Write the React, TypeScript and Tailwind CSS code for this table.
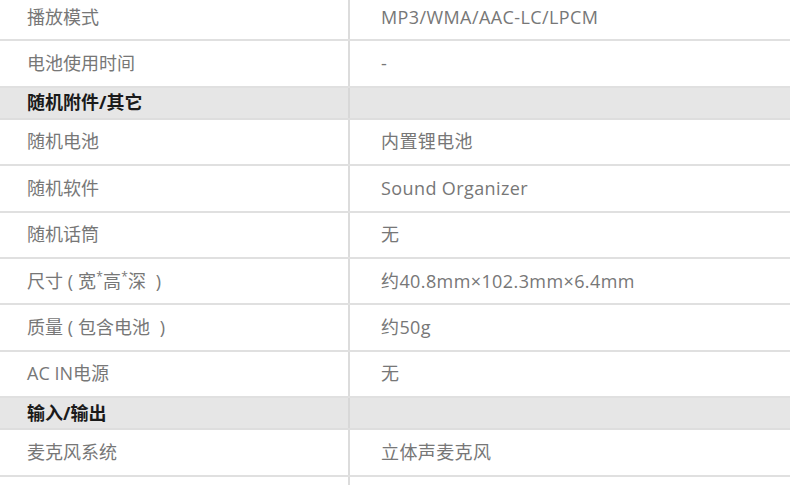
import type { ReactNode } from "react";

type SpecRow =
  | { kind: "section"; title: string }
  | { kind: "item"; label: ReactNode; value: ReactNode };

function Paren(props: { open?: boolean }) {
  return props.open ? (
    <span className="inline-block w-[15px] text-center">(</span>
  ) : (
    <span className="inline-block w-[18px] pr-[3px] text-right">)</span>
  );
}

function Star() {
  return (
    <span className="inline-block w-[7px] text-center align-super text-[12px] leading-none">
      *
    </span>
  );
}

const rows: SpecRow[] = [
  { kind: "item", label: "播放模式", value: "MP3/WMA/AAC-LC/LPCM" },
  { kind: "item", label: "电池使用时间", value: "-" },
  { kind: "section", title: "随机附件/其它" },
  { kind: "item", label: "随机电池", value: "内置锂电池" },
  { kind: "item", label: "随机软件", value: "Sound Organizer" },
  { kind: "item", label: "随机话筒", value: "无" },
  {
    kind: "item",
    label: (
      <>
        尺寸
        <Paren open />
        宽<Star />高<Star />深
        <Paren />
      </>
    ),
    value: "约40.8mm×102.3mm×6.4mm",
  },
  {
    kind: "item",
    label: (
      <>
        质量
        <Paren open />
        包含电池
        <Paren />
      </>
    ),
    value: "约50g",
  },
  { kind: "item", label: "AC IN电源", value: "无" },
  { kind: "section", title: "输入/输出" },
  { kind: "item", label: "麦克风系统", value: "立体声麦克风" },
  // next row only peeks in at the bottom edge
  { kind: "item", label: null, value: null },
];

function SectionRow(props: { title: string }) {
  return (
    <div className="grid h-[32px] grid-cols-[350px_1fr] border-b-2 border-[#dedede] bg-[#e6e6e6]">
      <div className="flex items-center border-r-2 border-[#d8d8d8] pl-[27px] text-[18px] font-bold text-[#1a1a1a]">
        {props.title}
      </div>
      <div />
    </div>
  );
}

function ItemRow(props: { label: ReactNode; value: ReactNode }) {
  return (
    <div className="grid h-[46.4px] grid-cols-[350px_1fr] border-b-2 border-[#e0e0e0] bg-white">
      <div className="flex items-center whitespace-nowrap border-r-2 border-[#dcdcdc] pl-[27px] text-[18px] text-[#777]">
        <span>{props.label}</span>
      </div>
      <div className="flex items-center whitespace-nowrap pl-[31px] text-[18px] tracking-[0.4px] text-[#777]">
        {props.value}
      </div>
    </div>
  );
}

export default function App() {
  return (
    <div className="h-[485px] w-[790px] overflow-hidden bg-white font-['Open_Sans','Noto_Sans_CJK_SC',sans-serif]">
      <div className="-mt-[5px] flex flex-col">
        {rows.map((row, i) =>
          row.kind === "section" ? (
            <SectionRow key={i} title={row.title} />
          ) : (
            <ItemRow key={i} label={row.label} value={row.value} />
          ),
        )}
      </div>
    </div>
  );
}
